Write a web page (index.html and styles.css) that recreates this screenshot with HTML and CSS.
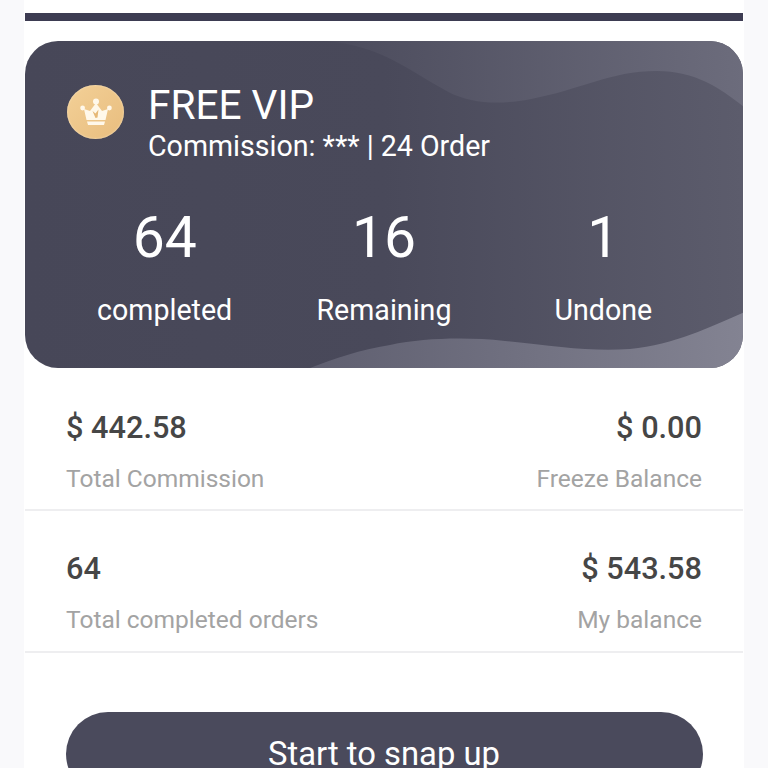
FILE: index.html
```html
<!DOCTYPE html>
<html lang="en">
<head>
    <meta charset="UTF-8">
    <meta name="viewport" content="width=device-width, initial-scale=1.0">
    <title>Snap Up</title>
    <link rel="stylesheet" href="styles.css">
</head>
<body>
    <div class="page">
        <div class="top-bar"></div>

        <div class="vip-card">
            <svg class="vip-waves" viewBox="0 0 718 326" preserveAspectRatio="none">
                <defs>
                    <linearGradient id="waveTop" x1="0" x2="1" y1="0" y2="0">
                        <stop offset="0" stop-color="#4b4b5c"/>
                        <stop offset="1" stop-color="#6c6c7c"/>
                    </linearGradient>
                    <linearGradient id="waveBottom" x1="0" x2="1" y1="0" y2="0">
                        <stop offset="0" stop-color="#5f5f70"/>
                        <stop offset="1" stop-color="#838392"/>
                    </linearGradient>
                </defs>
                <path fill="url(#waveTop)" d="M300 0C355 4 385 30 422 50C448 64 478 63 505 58C555 49 585 30 632 30C670 30 695 47 718 65V0Z"/>
                <path fill="url(#waveBottom)" d="M285 326C310 316 335 308 365 303C400 296 440 295 480 299C530 304 565 310 605 307C650 303 685 285 718 271V326Z"/>
            </svg>

            <div class="vip-head">
                <div class="vip-badge">
                    <svg class="vip-crown" viewBox="0 0 32 28">
                        <circle cx="16" cy="3.500" r="3" fill="#fff8ea"/>
                        <circle cx="2.600" cy="10" r="2.400" fill="#fff8ea"/>
                        <circle cx="29.400" cy="10" r="2.400" fill="#fff8ea"/>
                        <path fill="#fff8ea" d="M4 11L10 13L16 5L22 13L28 11L25.500 22H6.500ZM7 23.500H25L24 27H8Z"/>
                        <path fill="#e6b877" d="M12.500 13L15.500 15.500L18.500 11.500L17.500 19.500L15.500 20Z"/>
                    </svg>
                </div>
                <div class="vip-info">
                    <div class="vip-name">FREE VIP</div>
                    <div class="vip-rate">Commission: *** | 24 Order</div>
                </div>
            </div>

            <div class="vip-stats">
                <div class="stat">
                    <div class="stat-num">64</div>
                    <div class="stat-label">completed</div>
                </div>
                <div class="stat">
                    <div class="stat-num">16</div>
                    <div class="stat-label">Remaining</div>
                </div>
                <div class="stat">
                    <div class="stat-num">1</div>
                    <div class="stat-label">Undone</div>
                </div>
            </div>
        </div>

        <div class="row row-first">
            <div class="cell">
                <div class="value">$ 442.58</div>
                <div class="caption">Total Commission</div>
            </div>
            <div class="cell cell-right">
                <div class="value">$ 0.00</div>
                <div class="caption">Freeze Balance</div>
            </div>
        </div>

        <div class="row">
            <div class="cell">
                <div class="value">64</div>
                <div class="caption">Total completed orders</div>
            </div>
            <div class="cell cell-right">
                <div class="value">$ 543.58</div>
                <div class="caption">My balance</div>
            </div>
        </div>

        <button class="snap-btn">Start to snap up</button>
    </div>
</body>
</html>
```

FILE: styles.css
```css
html, body {
    margin: 0;
    height: 768px;
    overflow: hidden;
    background: #f9f9fb;
}

.page {
    box-sizing: border-box;
    width: 720px;
    height: 768px;
    margin: 0 auto;
    padding: 13px 1px 0;
    background: #ffffff;
    font-family: Roboto, "Liberation Sans", sans-serif;
    overflow: hidden;
}

.top-bar {
    height: 8px;
    background: #3d3c52;
}

.vip-card {
    position: relative;
    box-sizing: border-box;
    height: 327px;
    margin-top: 20px;
    padding: 44px 41px 0 42px;
    border-radius: 33px;
    background: linear-gradient(90deg, #474758 0%, #49495a 50%, #5c5c6c 100%);
    color: #ffffff;
    overflow: hidden;
}

.vip-waves {
    position: absolute;
    left: 0;
    top: 0;
    width: 100%;
    height: 100%;
}

.vip-head,
.vip-stats {
    position: relative;
}

.vip-head {
    display: flex;
    align-items: flex-start;
    gap: 24px;
}

.vip-badge {
    display: flex;
    justify-content: center;
    align-items: center;
    width: 57px;
    height: 54px;
    border-radius: 50%;
    background: linear-gradient(135deg, #f3d097, #e8bd7e);
    box-shadow: inset 0 0 2px #fbe8c6;
    flex-shrink: 0;
}

.vip-crown {
    width: 32px;
    height: 28px;
}

.vip-name {
    font-size: 40.6px;
    line-height: 40px;
}

.vip-rate {
    margin-top: 2px;
    font-size: 28.6px;
    line-height: 38px;
}

.vip-stats {
    display: flex;
    margin: 40px -11px 0 -12px;
}

.stat {
    flex: 1;
    text-align: center;
}

.stat-num {
    font-size: 57px;
    line-height: 66px;
}

.stat-label {
    margin-top: 21px;
    font-size: 28.6px;
    line-height: 36px;
}

.row {
    display: flex;
    justify-content: space-between;
    box-sizing: border-box;
    height: 142px;
    padding: 40px 41px 0;
    border-bottom: 2px solid #eeeef0;
}

.row-first {
    height: 143px;
    padding-top: 42px;
}

.value {
    font-size: 30.7px;
    font-weight: 500;
    line-height: 36px;
    color: #464646;
}

.caption {
    margin-top: 16px;
    font-size: 24.5px;
    line-height: 34px;
    color: #a3a3a3;
}

.cell-right {
    text-align: right;
}

.snap-btn {
    display: block;
    width: 637px;
    height: 84px;
    margin: 59px auto 0;
    padding: 0;
    border: none;
    border-radius: 42px;
    background: #4a4a5c;
    color: #ffffff;
    font-family: inherit;
    font-size: 32.8px;
}
```
